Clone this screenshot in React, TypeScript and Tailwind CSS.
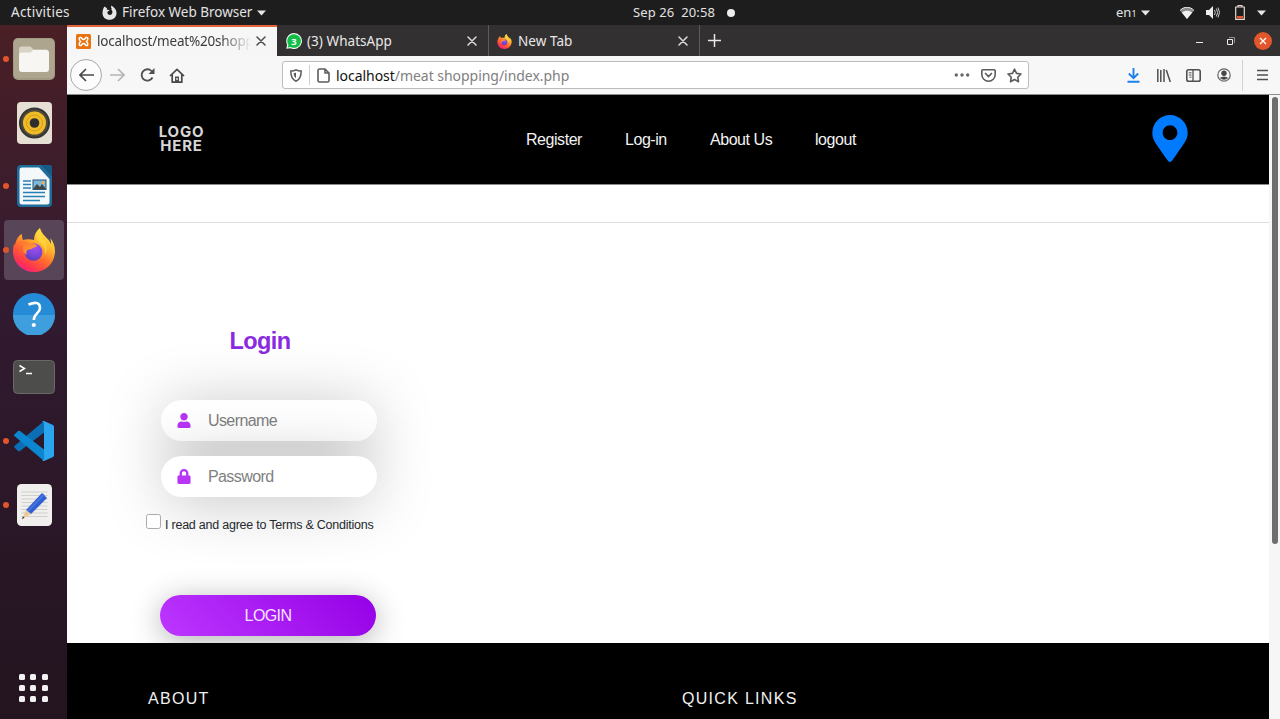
import React, { useId } from 'react';
import { FaUser, FaLock, FaMapMarkerAlt } from 'react-icons/fa';

function FirefoxLogo({ className }: { className: string }) {
  const id = useId().replace(/[^a-zA-Z0-9]/g, '');
  return (
    <svg viewBox="0 0 42 44" className={className}>
      <defs>
        <linearGradient id={id + 'a'} x1="0.85" y1="0" x2="0.25" y2="1">
          <stop offset="0" stopColor="#fff44f" />
          <stop offset=".35" stopColor="#ffb52b" />
          <stop offset=".6" stopColor="#ff6a2e" />
          <stop offset=".85" stopColor="#ff3350" />
          <stop offset="1" stopColor="#f0208e" />
        </linearGradient>
        <radialGradient id={id + 'b'} cx=".6" cy=".25" r=".8">
          <stop offset="0" stopColor="#a84bf0" />
          <stop offset=".6" stopColor="#7546d8" />
          <stop offset="1" stopColor="#5a3bb4" />
        </radialGradient>
        <linearGradient id={id + 'c'} x1="0" y1="0" x2="1" y2="1">
          <stop offset="0" stopColor="#ff6a35" />
          <stop offset="1" stopColor="#ffb02d" />
        </linearGradient>
      </defs>
      <path
        fill={'url(#' + id + 'a)'}
        d="M27 0C23 3 21 7 21 12C17 11 13 11 10 12C9 10 9 8 9 6C5 8 3 12 2 17L1 16C0 20 0 23 0 25C1 36 10 44 21 44C33 44 42 35 42 23C42 18 40 13 37 10C38 12 38 14 38 16C36 10 29 8 27 0Z"
      />
      <circle cx="20.5" cy="24" r="8.8" fill={'url(#' + id + 'b)'} />
      <path
        fill={'url(#' + id + 'c)'}
        d="M5 15C9 12 14 13 17 15.500C20 14.500 23 16 24.500 18.500C21 18.500 21 21 16 21.500C13 22 13 25 14 27C10 25 9 20 11 17C9 16 7 15 5 15Z"
      />
      <path fill="#ffd83d" opacity=".75" d="M27 0C23 4 22 9 25 13C29 16 33 20 32 27C35 22 34 15 30 10C28 7 26 4 27 0Z" />
    </svg>
  );
}

function Caret() {
  return (
    <svg width="9" height="6" viewBox="0 0 9 6" className="shrink-0">
      <path d="M0 .5h9L4.500 5.500z" fill="#e6e6e6" />
    </svg>
  );
}

function Cross({ color }: { color: string }) {
  return (
    <svg width="10" height="10" viewBox="0 0 10 10" className="shrink-0">
      <path d="M1 1l8 8M9 1l-8 8" stroke={color} strokeWidth="1.500" strokeLinecap="round" />
    </svg>
  );
}

function TopBar() {
  return (
    <div className="flex h-[25px] shrink-0 items-center bg-[#1d1d1d] text-[13px] leading-[25px] whitespace-nowrap text-[#e2e2e2]">
      <span className="ml-[11px] w-[91px] text-[13.500px] tracking-[0.25px]">Activities</span>
      <svg width="15" height="15" viewBox="0 0 15 15" className="shrink-0">
        <path
          fill="#e6e6e6"
          fillRule="evenodd"
          d="M2.500 1.500L5 3.200L4.800 5C6 4.500 7.200 5 7.500 5.800C6 6 5.200 7 5.500 8.300C6 10 8.500 10.500 9.800 9C11 7.500 10.500 5.500 9 4.200L10 4C9 3 8.700 2 9.500 .5C11 2 14.500 3.500 14.500 8C14.500 12 11.500 14.800 7.500 14.800C3.500 14.800 .5 12 .5 8C.5 5.500 1.300 3 2.500 1.500Z"
        />
      </svg>
      <span className="ml-[5px] w-[135px] text-[13.500px] tracking-[-0.01px]">Firefox Web Browser</span>
      <Caret />
      <span className="ml-[367px] w-[94px] text-[13px] tracking-[0.1px] whitespace-pre">Sep 26  20:58</span>
      <span className="size-[8px] rounded-full bg-[#eee]" />
      <span className="ml-[381px] w-[25px]">
        en<span className="text-[9px]">1</span>
      </span>
      <Caret />
      <svg width="14" height="12" viewBox="0 0 14 12" className="ml-[30px] shrink-0">
        <path d="M7 12L0 3.500C4 -.8 10 -.8 14 3.500Z" fill="#8b8b8b" />
        <path d="M7 12L1.800 5.600C5 3 9 3 12.200 5.600Z" fill="#f2f2f2" />
        <path d="M0 3.500C4 -.8 10 -.8 14 3.500" stroke="#eee" strokeWidth="1" fill="none" />
      </svg>
      <svg width="14" height="13" viewBox="0 0 14 13" className="ml-[12px] shrink-0">
        <path d="M0 4h3l4-4v13L3 9H0z" fill="#eee" />
        <path d="M8.500 4q1.500 2.500 0 5M10.300 2.500q2.700 4 0 8M12 1.500q3 5 0 10" stroke="#ccc" fill="none" />
      </svg>
      <svg width="10" height="15" viewBox="0 0 10 15" className="ml-[15px] shrink-0">
        <path d="M3 1.500V.5h4v1M.7 2h8.600v12.300H.7z" fill="none" stroke="#e8d8d0" strokeWidth="1.200" />
        <path d="M2 11h6v2.500H2z" fill="#e9582d" />
      </svg>
      <span className="ml-[12px] flex">
        <Caret />
      </span>
    </div>
  );
}

function DockItem({ running, active, children }: { running?: boolean; active?: boolean; children: React.ReactNode }) {
  return (
    <div className="flex h-[63.700px] w-[67px] shrink-0 items-center">
      <span className={running ? 'ml-[3px] size-[6px] shrink-0' : 'ml-[3px] size-[6px] shrink-0 opacity-0'}>
        <span className="relative z-10 block size-[6px] rounded-full bg-[#e2552b]" />
      </span>
      <div
        className={
          active
            ? '-ml-[5px] flex h-[60px] w-[60px] items-center justify-center rounded-[4px] bg-[#594558]'
            : '-ml-[5px] flex h-[60px] w-[60px] items-center justify-center'
        }
      >
        {children}
      </div>
    </div>
  );
}

function Dock() {
  return (
    <aside className="flex w-[67px] shrink-0 flex-col bg-linear-to-b from-[#4a1f25] via-[#321a30] via-40% to-[#23141f] pt-[2px]">
      <DockItem running>
        <svg width="42" height="42" viewBox="0 0 42 42">
          <rect width="42" height="42" rx="5" fill="#a39a84" />
          <rect x="1" y="1" width="40" height="39" rx="4" fill="#aea58e" />
          <path d="M6 11q0-2.500 2.500-2.500h9l3 3H33q2.500 0 2.500 2.500v5H6z" fill="#d9d3c5" />
          <path d="M6 17q0-2.500 2.500-2.500h9l3-2.500H33q3 0 3 3v16q0 3-3 3H9q-3 0-3-3z" fill="#f7f6f3" />
        </svg>
      </DockItem>
      <DockItem>
        <svg width="35" height="42" viewBox="0 0 35 42">
          <rect width="35" height="42" rx="4" fill="#e5dfd4" />
          <circle cx="17.500" cy="21" r="15.500" fill="#343434" />
          <circle cx="17.500" cy="21" r="13.500" fill="#4f4b3c" />
          <circle cx="17.500" cy="21" r="11.500" fill="#f0bd28" />
          <circle cx="17.500" cy="21" r="8" fill="none" stroke="#d39e1c" />
          <circle cx="17.500" cy="21" r="4.800" fill="#2e2e2e" />
        </svg>
      </DockItem>
      <DockItem running>
        <svg width="35" height="42" viewBox="0 0 35 42">
          <path d="M4 0h21l10 11v27q0 4-4 4H4q-4 0-4-4V4q0-4 4-4z" fill="#1d6d9c" />
          <path d="M4.500 2.500H22L32.500 14v23q0 2.500-2.500 2.500H5q-2.500 0-2.500-2.500V5q0-2.500 2-2.500z" fill="#f4f8fa" />
          <path d="M25 0h8q2 0 2 2v9z" fill="#155b87" />
          <path d="M6 16h8M6 19.500h8M6 23h8M6 27.500h22M6 31.500h22M6 35.500h17" stroke="#2580b5" strokeWidth="1.700" />
          <rect x="16" y="15" width="13" height="9.500" fill="#7cb8d8" stroke="#285977" />
          <path d="M16 24l4-5 3 3 2-3 4 5z" fill="#444" />
          <circle cx="26" cy="17.500" r="1.500" fill="#f4ae45" />
        </svg>
      </DockItem>
      <DockItem running active>
        <FirefoxLogo className="h-[44px] w-[42px]" />
      </DockItem>
      <DockItem>
        <svg width="42" height="42" viewBox="0 0 42 42">
          <circle cx="21" cy="21" r="21" fill="#258bd6" />
          <path d="M0 22a21 21 0 0 0 42 0z" fill="#3f9edd" />
          <path d="M15.500 11.500Q27 7 27 15C27 20 20.800 20.500 20.800 27" fill="none" stroke="#fff" strokeWidth="2.600" />
          <circle cx="20.800" cy="32" r="2.100" fill="#fff" />
        </svg>
      </DockItem>
      <DockItem>
        <svg width="42" height="34" viewBox="0 0 42 34">
          <rect x=".5" y=".5" width="41" height="33" rx="4" fill="#4d4e4b" stroke="#6a6967" />
          <path d="M6.500 5.500l5 3-5 3M13 13.500h6" stroke="#fff" strokeWidth="1.500" fill="none" />
        </svg>
      </DockItem>
      <DockItem running>
        <svg width="40" height="40" viewBox="0 0 40 40">
          <path d="M0 26l4 4q1 .7 2 0L30 11.500V0L1 24.500q-1 .7-1 1.500z" fill="#0b6fb5" />
          <path d="M0 14l4-4q1-.7 2 0l24 18.500V40L1 15.500q-1-.7-1-1.500z" fill="#0c86cf" />
          <path d="M30 0l9 4q1 .5 1 2v28q0 1.500-1 2l-9 4q-1 .2-2-1 1.500.5 2-1V2q-.5-1.500-2-1 1-1.300 2-1z" fill="#2ba6ee" />
        </svg>
      </DockItem>
      <DockItem running>
        <svg width="35" height="42" viewBox="0 0 35 42">
          <rect width="35" height="42" rx="4.500" fill="#f0efed" />
          <path d="M4.500 8h26M4.500 11.500h26M4.500 15h26M4.500 18.500h26M4.500 22h26M4.500 25.500h26M4.500 29h26M4.500 32.500h26" stroke="#cfcfcc" />
          <path d="M9 26L25 9l5 5-16 16z" fill="#2f5fd0" />
          <path d="M10.500 27.500L27 10.500" stroke="#4674e0" strokeWidth="2" />
          <path d="M9 26l5 4-9 5z" fill="#ecc999" />
          <path d="M6 32.500L5 35l2.500-1.200z" fill="#222" />
        </svg>
      </DockItem>
      <div className="mt-auto mb-[17px] ml-[19px] grid w-[29px] grid-cols-3 gap-[5px]">
        {Array.from({ length: 9 }, (_, i) => (
          <span key={i} className="size-[6px] rounded-[1.500px] bg-[#f3f0f2]" />
        ))}
      </div>
    </aside>
  );
}

function TabBar() {
  return (
    <div className="flex h-[31px] shrink-0 items-center bg-[#333031] text-[13px] whitespace-nowrap text-[#e8e8e8]">
      <div className="flex h-[31px] w-[210px] items-center border-t-2 border-[#e5633a] bg-[#f6f6f7] text-[#3c3c3c]">
        <svg width="15" height="15" viewBox="0 0 15 15" className="mb-[1px] ml-[9px] shrink-0">
          <rect width="15" height="15" rx="1.500" fill="#e8730f" />
          <path
            d="M4.800 3.500C3 3 2.500 5.500 4.500 7.500C2.500 9.500 3 12 4.800 11.500C6 11 6 9.500 7.500 9.500C9 9.500 9 11 10.200 11.500C12 12 12.500 9.500 10.500 7.500C12.500 5.500 12 3 10.200 3.500C9 4 9 5.500 7.500 5.500C6 5.500 6 4 4.800 3.500Z"
            fill="none"
            stroke="#fff"
            strokeWidth="1.500"
          />
        </svg>
        <span className="ml-[6px] w-[154px] overflow-hidden mask-r-from-80% mask-r-to-100% text-[13.500px] tracking-[-0.2px]">localhost/meat%20shopping</span>
        <span className="mb-[1px] ml-[5px] flex">
          <Cross color="#4a4a4a" />
        </span>
      </div>
      <div className="flex h-[31px] w-[212px] items-center border-r border-[#5c5a5b] pt-[1px]">
        <svg width="16" height="16" viewBox="0 0 16 16" className="ml-[9px] shrink-0">
          <path d="M8 0a8 8 0 1 1-3.500 15.200L.3 15.700l.8-4A8 8 0 0 1 8 0z" fill="#e9f9ee" />
          <path d="M8 1.200a6.800 6.800 0 1 1-3.300 12.700l-2.900.5.600-2.700A6.800 6.800 0 0 1 8 1.200z" fill="#12bd48" />
          <text x="8" y="11.500" fontSize="9.500" fontWeight="700" textAnchor="middle" fill="#fff">
            3
          </text>
        </svg>
        <span className="ml-[5px] w-[160px] text-[13.500px] tracking-[0.05px]">(3) WhatsApp</span>
        <Cross color="#ddd" />
      </div>
      <div className="flex h-[31px] w-[211px] items-center border-r border-[#5c5a5b] pt-[1px]">
        <FirefoxLogo className="ml-[8px] h-[15px] w-[15px] shrink-0" />
        <span className="ml-[6px] w-[160px] text-[13.500px] tracking-[0.050px]">New Tab</span>
        <Cross color="#ddd" />
      </div>
      <svg width="13" height="13" viewBox="0 0 13 13" className="ml-[8px]">
        <path d="M6.500 0v13M0 6.500h13" stroke="#e8e8e8" strokeWidth="1.500" />
      </svg>
      <span className="mt-[4px] ml-auto h-[1.500px] w-[7px] bg-[#eee]" />
      <svg width="8" height="8" viewBox="0 0 8 8" className="ml-[24px]">
        <path d="M.5 2.500h5v5h-5z" fill="none" stroke="#eee" />
        <path d="M2 .5h5.500V6" fill="none" stroke="#aaa" strokeWidth=".8" />
      </svg>
      <span className="mr-[8px] ml-[19px] flex size-[18px] items-center justify-center rounded-full bg-[#e2562b]">
        <svg width="8" height="8" viewBox="0 0 8 8">
          <path d="M1 1l6 6M7 1L1 7" stroke="#fff" strokeWidth="1.300" />
        </svg>
      </span>
    </div>
  );
}

function Toolbar() {
  return (
    <div className="flex h-[39px] shrink-0 items-center border-b border-[#8d8d8d] bg-[#f7f7f8]">
      <span className="ml-[3px] flex size-[32px] shrink-0 items-center justify-center rounded-full border border-[#a9a9a9] bg-[#fcfcfc]">
        <svg width="15" height="14" viewBox="0 0 15 14">
          <path d="M7 1L1 7l6 6M1 7h14" fill="none" stroke="#484848" strokeWidth="1.700" />
        </svg>
      </span>
      <svg width="15" height="14" viewBox="0 0 15 14" className="ml-[8px]">
        <path d="M8 1l6 6-6 6M14 7H0" fill="none" stroke="#b5b5b5" strokeWidth="1.600" />
      </svg>
      <svg width="15" height="14" viewBox="0 0 15 14" className="ml-[15px]">
        <path d="M12.500 9.500A5.700 5.700 0 1 1 11.500 3L13 4.500" fill="none" stroke="#505050" strokeWidth="1.800" />
        <path d="M14.500 0v6H8.500z" fill="#505050" />
      </svg>
      <svg width="16" height="15" viewBox="0 0 16 15" className="ml-[14px]">
        <path d="M1 8l7-6.700L15 8M3.200 6.500v7.700h9.600V6.500" fill="none" stroke="#484848" strokeWidth="1.700" strokeLinejoin="round" />
        <path d="M6 14V8.500h4V14z" fill="#505050" />
        <path d="M7.400 10h1.200v2H7.400z" fill="#fff" />
      </svg>
      <div className="ml-[97px] flex h-[28px] w-[747px] shrink-0 items-center rounded-[3px] border border-[#bdbdbd] bg-white">
        <svg width="12" height="13" viewBox="0 0 12 13" className="ml-[7px]">
          <path d="M6 .8q2 1.200 5.200 1.200c0 5-.8 8.500-5.200 10.200C1.600 10.500.8 7 .8 2Q4 2 6 .8z" fill="none" stroke="#5c5c5c" strokeWidth="1.500" />
          <path d="M6 3.500q-1 .6-2.500.7.200 3.500 2.500 5.300z" fill="#5c5c5c" />
        </svg>
        <span className="ml-[7px] h-[20px] w-px bg-[#cfcfcf]" />
        <svg width="13" height="15" viewBox="0 0 13 15" className="ml-[7px]">
          <path d="M1 2.500Q1 1 2.500 1H8l4 4v7.500q0 1.500-1.500 1.500h-8Q1 14 1 12.500zM8 1v4h4" fill="none" stroke="#5c5c5c" strokeWidth="1.600" strokeLinejoin="round" />
        </svg>
        <span className="ml-[6px] w-[618px] shrink-0 pt-[1px] text-[14px] leading-[20px] tracking-[-0.040px] whitespace-nowrap text-[#808080]">
          <span className="text-[#111]">localhost</span>/meat shopping/index.php
        </span>
        <svg width="16" height="4" viewBox="0 0 16 4" className="shrink-0">
          <g fill="#666">
            <circle cx="2.300" cy="2" r="1.700" />
            <circle cx="8" cy="2" r="1.700" />
            <circle cx="13.700" cy="2" r="1.700" />
          </g>
        </svg>
        <svg width="15" height="13" viewBox="0 0 15 13" className="ml-[11px] shrink-0">
          <path d="M2 .8h11q1.200 0 1.200 1.200v3.500a6.700 6.700 0 0 1-13.400 0V2Q.8.8 2 .8z" fill="none" stroke="#5c5c5c" strokeWidth="1.600" />
          <path d="M4.500 4.500l3 3 3-3" fill="none" stroke="#5c5c5c" strokeWidth="1.700" strokeLinecap="round" />
        </svg>
        <svg width="15" height="15" viewBox="0 0 15 15" className="ml-[11px] shrink-0">
          <path d="M7.500 1.200l2 4.200 4.500.6-3.300 3.200.8 4.500-4-2.200-4 2.200.8-4.500L1 6l4.500-.6z" fill="none" stroke="#5c5c5c" strokeWidth="1.600" strokeLinejoin="round" />
        </svg>
      </div>
      <svg width="13" height="15" viewBox="0 0 13 15" className="ml-[98px]">
        <path d="M6.500 0v10M1.800 5.500l4.700 4.700 4.700-4.700M.5 13.700h12" fill="none" stroke="#1d82e8" strokeWidth="1.900" />
      </svg>
      <svg width="14" height="13" viewBox="0 0 14 13" className="ml-[17px]">
        <path d="M.8 0v13M3.800 1v12M7 0v13M9.300 1l4 12" stroke="#505050" strokeWidth="1.500" />
      </svg>
      <svg width="15" height="13" viewBox="0 0 15 13" className="ml-[15px]">
        <rect x=".8" y=".8" width="13.400" height="11.400" rx="1.800" fill="none" stroke="#505050" strokeWidth="1.600" />
        <path d="M7 1v11" stroke="#505050" strokeWidth="1.300" />
        <path d="M2.800 3.800h2.700M2.800 6h2.700M3.500 8.200h2" stroke="#505050" strokeWidth="1" />
      </svg>
      <svg width="14" height="14" viewBox="0 0 14 14" className="ml-[16px]">
        <circle cx="7" cy="7" r="6.200" fill="none" stroke="#666" strokeWidth="1.200" />
        <circle cx="7" cy="5.300" r="2.700" fill="#484848" />
        <path d="M2.800 10Q7 6.800 11.200 10Q7 13.500 2.800 10z" fill="#484848" />
      </svg>
      <span className="ml-[11px] h-[31px] w-px bg-[#d2d2d2]" />
      <svg width="11" height="12" viewBox="0 0 11 12" className="ml-[14px]">
        <path d="M0 1.500h11M0 6h11M0 10.500h11" stroke="#505050" strokeWidth="1.700" />
      </svg>
    </div>
  );
}

function Field({ icon, placeholder, type }: { icon: React.ReactNode; placeholder: string; type: string }) {
  return (
    <label className="flex h-[41px] w-[216px] items-center rounded-full bg-white pl-[16px] text-[#b735f5] shadow-[0_5px_60px_0_rgba(0,0,0,0.25)]">
      {icon}
      <input
        type={type}
        placeholder={placeholder}
        className="ml-[17px] w-[150px] bg-transparent text-[16px] leading-[24px] tracking-[-0.600px] outline-none placeholder:text-[#808080]"
      />
    </label>
  );
}

function Page() {
  return (
    <div className="flex h-[624px] w-[1202px] shrink-0 flex-col overflow-hidden bg-white font-['Liberation_Sans',Arial,sans-serif]">
      <header className="flex h-[89px] shrink-0 items-center bg-black text-[16px] tracking-[-0.450px] whitespace-nowrap text-[#f2f2f2]">
        <div className="mb-[2px] ml-[84px] flex w-[60px] flex-col items-center pl-px font-[Inter,sans-serif] text-[15px] leading-[14px] font-bold tracking-[0.800px] text-[#d6d6d6]">
          <span>LOGO</span>
          <span>HERE</span>
        </div>
        <nav className="ml-[315px] flex">
          <a className="w-[99px]">Register</a>
          <a className="w-[85px]">Log-in</a>
          <a className="w-[105px]">About Us</a>
          <a className="w-[337px]">logout</a>
        </nav>
        <FaMapMarkerAlt className="mb-[2px] h-[47px] w-[36px] text-[#007bff]" />
      </header>
      <div className="h-[39px] shrink-0 border-t border-b border-t-[#8a8a8a] border-b-[#dedede]" />
      <form className="flex h-[420px] shrink-0 flex-col pl-[94px]">
        <h2 className="mt-[100px] w-[198px] text-center text-[23.500px] leading-[36px] font-bold tracking-[-0.600px] text-[#8a2be2]">Login</h2>
        <div className="mt-[41px] flex flex-col gap-[15px]">
          <Field icon={<FaUser className="h-[15px] w-[14px]" />} placeholder="Username" type="text" />
          <Field icon={<FaLock className="h-[15px] w-[14px]" />} placeholder="Password" type="password" />
        </div>
        <label className="mt-[17px] -ml-[15px] flex h-[20px] text-[12.500px] leading-[22px] tracking-[-0.230px] whitespace-nowrap text-[#24292d]">
          <span className="mr-[4px] size-[15px] rounded-[2.500px] border border-[#ababab] bg-white" />
          I read and agree to Terms &amp; Conditions
        </label>
        <button
          type="button"
          className="mt-[61px] -ml-[1px] h-[41px] w-[216px] rounded-full bg-linear-[45deg,#bd37ff,#9500e6] text-[16px] tracking-[-0.600px] text-[#f6e6ff] shadow-[0_5px_30px_0_rgba(0,0,0,0.3)]"
        >
          LOGIN
        </button>
      </form>
      <footer className="relative flex flex-1 bg-black pt-[44px] text-[16px] leading-[24px] tracking-[1.300px] text-[#f0f0f0]">
        <h6 className="ml-[81px] w-[534px]">ABOUT</h6>
        <h6>QUICK LINKS</h6>
      </footer>
    </div>
  );
}

export default function App() {
  return (
    <div className="flex h-[719px] w-[1280px] flex-col overflow-hidden bg-white font-['Noto_Sans',sans-serif]">
      <TopBar />
      <div className="flex min-h-0 flex-1">
        <Dock />
        <main className="flex w-[1213px] shrink-0 flex-col">
          <TabBar />
          <Toolbar />
          <div className="flex">
            <Page />
            <div className="flex w-[11px] justify-center bg-[#f6f6f6] pt-[2px]">
              <div className="h-[447px] w-[6px] rounded-full bg-[#6e6e6e]" />
            </div>
          </div>
        </main>
      </div>
    </div>
  );
}
